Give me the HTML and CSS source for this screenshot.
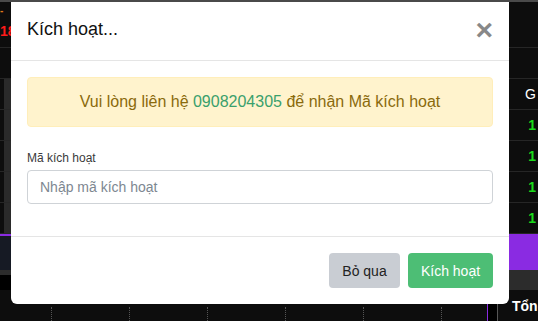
FILE: index.html
```html
<!DOCTYPE html>
<html lang="vi">
<head>
    <meta charset="UTF-8" />
    <title>Kích hoạt</title>
    <link rel="stylesheet" href="styles.css">
</head>
<body>
    <div class="topbar"></div>

    <!-- board underneath the modal -->
    <div class="board">
        <div class="row row-head">
            <span class="cell-left"><span class="orange">-</span></span>
        </div>
        <div class="row row-head">
            <span class="cell-left"><span class="red">18</span></span>
        </div>
        <div class="row"></div>
        <div class="row"><span class="cell-left grey"></span><span class="cell-right white">G</span></div>
        <div class="row"><span class="cell-left grey"></span><span class="cell-right green">1</span></div>
        <div class="row"><span class="cell-left grey"></span><span class="cell-right green">1</span></div>
        <div class="row"><span class="cell-left grey"></span><span class="cell-right green">1</span></div>
        <div class="row"><span class="cell-left grey"></span><span class="cell-right green">1</span></div>
        <div class="band-purple"></div>
        <div class="band-grey"></div>
        <div class="footer-row">
            <span class="dots"></span><span class="dots"></span><span class="dots"></span>
            <span class="dots"></span><span class="dots"></span><span class="dots"></span>
            <span class="total">Tổng</span>
        </div>
    </div>

    <div class="modal">
        <div class="modal-header">
            <h4 class="modal-title">Kích hoạt...</h4>
            <span class="close">&times;</span>
        </div>
        <div class="modal-body">
            <div class="alert">Vui lòng liên hệ&nbsp;<span class="phone">0908204305</span>&nbsp;để nhận Mã kích hoạt</div>
            <div class="form-group">
                <label for="code">Mã kích hoạt</label>
                <input type="text" id="code" placeholder="Nhập mã kích hoạt">
            </div>
        </div>
        <div class="modal-footer">
            <button class="btn btn-skip">Bỏ qua</button>
            <button class="btn btn-ok">Kích hoạt</button>
        </div>
    </div>
</body>
</html>
```

FILE: styles.css
```css
* {
    margin: 0;
    padding: 0;
    box-sizing: border-box;
    font-family: "Liberation Sans", Arial, sans-serif;
}
body {
    width: 538px;
    height: 321px;
    overflow: hidden;
    background-color: #000;
    position: relative;
}
.topbar {
    position: absolute;
    top: 0;
    left: 0;
    width: 100%;
    height: 2px;
    background-color: #4a4a4a;
    z-index: 20;
}

/* background board */
.board {
    display: flex;
    flex-direction: column;
    height: 100%;
    background-color: #0d0d0d;
}
.row {
    display: flex;
    justify-content: space-between;
    align-items: center;
    height: 31px;
    flex-shrink: 0;
    border-bottom: 1px solid #262626;
    font-size: 14px;
    font-weight: bold;
}
.row-head {
    height: 20px;
    border-bottom: none;
}
.row-head + .row-head {
    height: 28px;
    align-items: flex-start;
    padding-top: 3px;
    border-bottom: 1px solid #262626;
}
.cell-left {
    width: 11px;
    height: 100%;
    display: flex;
    align-items: center;
    overflow: hidden;
}
.row-head + .row-head .cell-left {
    align-items: flex-start;
}
.cell-left.grey {
    background: linear-gradient(to right, #0d0d0d 4px, #2a2a2a 4px);
}
.cell-right {
    width: 20px;
    text-align: right;
    padding-right: 2px;
}
.orange { color: #e07b1a; font-size: 10px; }
.red { color: #ff1a1a; }
.white { color: #fff; font-weight: normal; width: 18px; }
.green { color: #1adb1a; }
.band-purple {
    height: 36px;
    flex-shrink: 0;
    background: linear-gradient(to bottom, #8a2be2 2px, #161a24 2px);
    border-right: 30px solid #8a2be2;
}
.band-grey {
    height: 20px;
    flex-shrink: 0;
    background: linear-gradient(to bottom, #2c2c2c 5px, #000 5px);
    border-right: 30px solid #2c2c2c;
}
.footer-row {
    flex: 1;
    display: flex;
    align-items: flex-end;
    padding-left: 51px;
    position: relative;
}
.dots {
    width: 78px;
    height: 14px;
    border-left: 1px dotted #555;
}
.total {
    position: absolute;
    right: 0;
    top: 0;
    width: 51px;
    padding-left: 24px;
    color: #fff;
    font-weight: bold;
    font-size: 14px;
    border-left: 1px solid #8a2be2;
    height: 100%;
    display: flex;
    align-items: center;
    box-shadow: inset 9px 0 0 #000, inset 10px 0 0 #555;
}

/* modal */
.modal {
    position: absolute;
    top: 2px;
    left: 11px;
    width: 498px;
    height: 302px;
    background-color: #fff;
    border-radius: 0 0 6px 6px;
    display: flex;
    flex-direction: column;
    z-index: 10;
}
.modal-header {
    height: 59px;
    padding: 0 16px;
    display: flex;
    justify-content: space-between;
    align-items: center;
    border-bottom: 1px solid #e5e5e5;
}
.modal-title {
    font-size: 18px;
    font-weight: normal;
    color: #111;
    margin-top: -4px;
}
.close {
    font-size: 30px;
    font-weight: bold;
    color: #888;
    line-height: 1;
    margin-top: -2px;
}
.modal-body {
    padding: 16px 16px 0;
    height: 176px;
    border-bottom: 1px solid #e5e5e5;
}
.alert {
    height: 50px;
    display: flex;
    align-items: center;
    justify-content: center;
    background-color: #fff3cd;
    border: 1px solid #ffeeba;
    border-radius: 4px;
    color: #8a6a0c;
    font-size: 16px;
}
.phone {
    color: #3aa06c;
}
.form-group {
    margin-top: 22px;
    display: flex;
    flex-direction: column;
}
.form-group label {
    font-size: 12px;
    color: #3a3a3a;
    line-height: 18px;
    margin-bottom: 3px;
}
.form-group input {
    height: 34px;
    border: 1px solid #cfd3d7;
    border-radius: 4px;
    padding: 0 12px;
    font-size: 14px;
    outline: none;
}
.form-group input::placeholder {
    color: #7d8791;
}
.modal-footer {
    display: flex;
    justify-content: flex-end;
    gap: 8px;
    padding: 16px 16px 0;
}
.btn {
    height: 35px;
    border: none;
    border-radius: 4px;
    font-size: 14px;
    padding: 0 12px;
}
.btn-skip {
    width: 71px;
    background-color: #c9cdd3;
    color: #222;
}
.btn-ok {
    width: 85px;
    background-color: #4dbe75;
    color: #fff;
}
```
